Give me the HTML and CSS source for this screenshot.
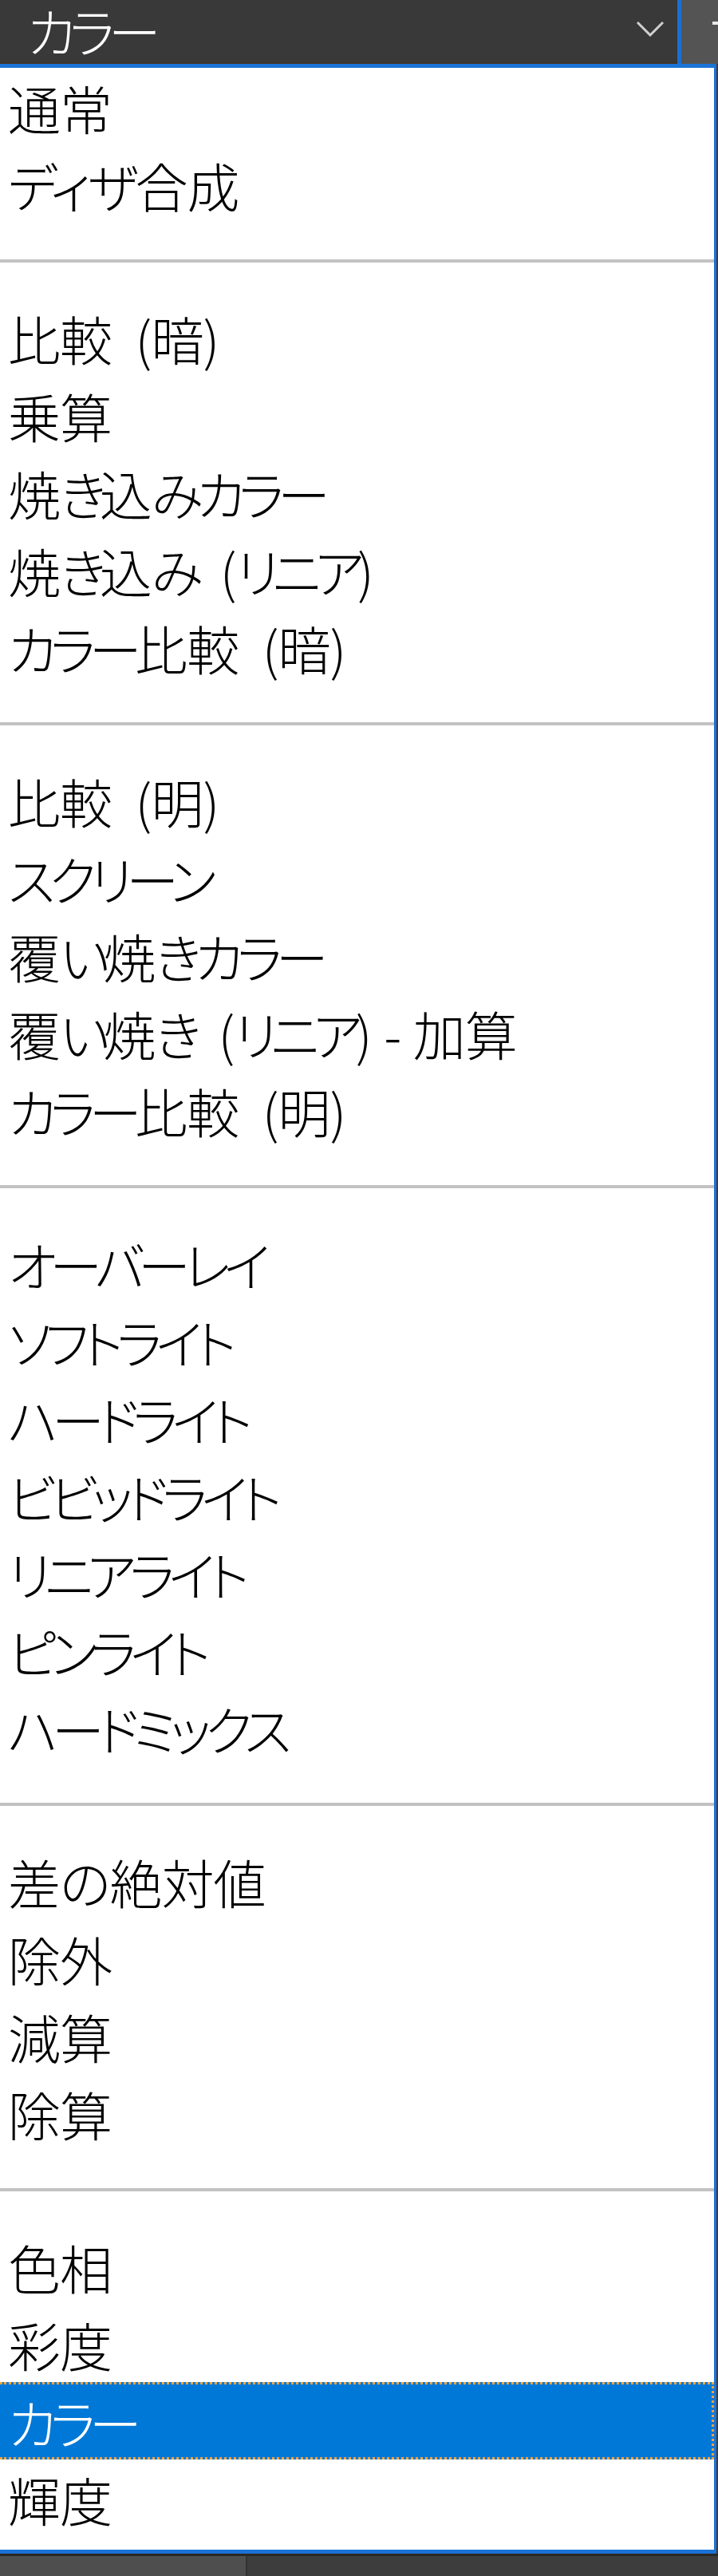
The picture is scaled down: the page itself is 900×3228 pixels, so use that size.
FILE: index.html
```html
<!DOCTYPE html>
<html lang="ja">
<head>
<meta charset="utf-8">
<title>描画モード</title>
<link rel="stylesheet" href="styles.css">
</head>
<body>
<div class="screen">
  <div class="combo">
    <div class="combo-field">
      <span class="combo-value"><span class="kana">カラー</span></span>
      <svg class="chevron" width="36" height="20" viewBox="0 0 36 20" aria-hidden="true">
        <polyline points="2,2 18,18 34,2" fill="none" stroke="#d0d0d0" stroke-width="3"/>
      </svg>
    </div>
    <div class="combo-side"><span class="side-dash"></span></div>
  </div>
  <ul class="menu" role="listbox">
    <li class="item">通常</li>
    <li class="item"><span class="kana-s">ディザ</span>合成</li>
    <li class="sep" role="separator"></li>
    <li class="item">比較 (暗)</li>
    <li class="item">乗算</li>
    <li class="item">焼<span class="kana">き</span>込<span class="kana">みカラー</span></li>
    <li class="item">焼<span class="kana">き</span>込<span class="kana">み</span> (<span class="kana">リニア</span>)</li>
    <li class="item"><span class="kana">カラー</span>比較 (暗)</li>
    <li class="sep" role="separator"></li>
    <li class="item">比較 (明)</li>
    <li class="item"><span class="kana">スクリーン</span></li>
    <li class="item">覆<span class="kana">い</span>焼<span class="kana">きカラー</span></li>
    <li class="item">覆<span class="kana">い</span>焼<span class="kana">き</span> (<span class="kana">リニア</span>)<span class="tight"> - </span>加算</li>
    <li class="item"><span class="kana">カラー</span>比較 (明)</li>
    <li class="sep" role="separator"></li>
    <li class="item"><span class="kana">オーバーレイ</span></li>
    <li class="item"><span class="kana">ソフトライト</span></li>
    <li class="item"><span class="kana">ハードライト</span></li>
    <li class="item"><span class="kana">ビビッドライト</span></li>
    <li class="item"><span class="kana">リニアライト</span></li>
    <li class="item"><span class="kana">ピンライト</span></li>
    <li class="item"><span class="kana">ハードミックス</span></li>
    <li class="sep" role="separator"></li>
    <li class="item">差の絶対値</li>
    <li class="item">除外</li>
    <li class="item">減算</li>
    <li class="item">除算</li>
    <li class="sep" role="separator"></li>
    <li class="item">色相</li>
    <li class="item">彩度</li>
    <li class="item selected" aria-selected="true"><span class="kana">カラー</span></li>
    <li class="item">輝度</li>
  </ul>
  <div class="footer">
    <div class="footer-left"></div>
    <div class="footer-right"></div>
  </div>
</div>
</body>
</html>
```
FILE: styles.css
```css
html, body {
  margin: 0;
  padding: 0;
}
body {
  background: #3c3c3c;
  font-family: "Noto Sans CJK JP", "Noto Sans", sans-serif;
  font-weight: 300;
  font-feature-settings: "palt" 1;
}
.screen {
  width: 900px;
  height: 3228px;
  display: flex;
  flex-direction: column;
  overflow: hidden;
}
.combo {
  display: flex;
  height: 80px;
  flex: none;
}
.combo-field {
  width: 799px;
  border-right: 5px solid #1b6fd1;
  background: #393939;
  box-shadow: inset 0 -2px 0 #3f3429;
  display: flex;
  align-items: flex-start;
  padding-left: 34px;
  padding-right: 16px;
}
.combo-value {
  color: #ffffff;
  font-size: 66px;
  line-height: 66px;
  padding-top: 4px;
  letter-spacing: -1px;
}
.kana {
  letter-spacing: -8px;
}
.kana-s {
  letter-spacing: -4px;
}
.tight {
  word-spacing: 2px;
}
.chevron {
  margin-left: auto;
  margin-top: 26px;
}
.combo-side {
  flex: 1;
  background: #545454;
  position: relative;
}
.side-dash {
  position: absolute;
  right: 0;
  top: 27px;
  width: 7px;
  height: 4px;
  background: #e8e8e8;
}
.menu {
  list-style: none;
  margin: 0;
  padding: 0 0 16px 0;
  width: 895px;
  background: #ffffff;
  border-top: 5px solid #1b73d6;
  border-right: 3px solid #1b73d6;
  border-bottom: 5px solid #1b73d6;
  flex: none;
}
.item {
  height: 97px;
  box-sizing: border-box;
  padding-left: 10px;
  padding-top: 4px;
  font-size: 66px;
  line-height: 90px;
  letter-spacing: -1px;
  word-spacing: 16px;
  color: #000000;
  white-space: nowrap;
}
.item.selected {
  background: #0078d7;
  color: #ffffff;
  border-top: 3px dotted #f4a43c;
  border-bottom: 3px dotted #f4a43c;
  border-right: 3px dotted #f4a43c;
  padding-top: 1px;
}
.sep {
  height: 95px;
  display: flex;
  align-items: center;
}
.sep::after {
  content: "";
  display: block;
  width: 100%;
  height: 4px;
  background: #c2c2c2;
}
.footer {
  flex: 1;
  display: flex;
  border-top: 3px solid #2b2723;
}
.footer-left {
  width: 308px;
  background: #4e4e4e;
  border-right: 2px solid #333333;
}
.footer-right {
  flex: 1;
  background: #3d3d3d;
}
```
